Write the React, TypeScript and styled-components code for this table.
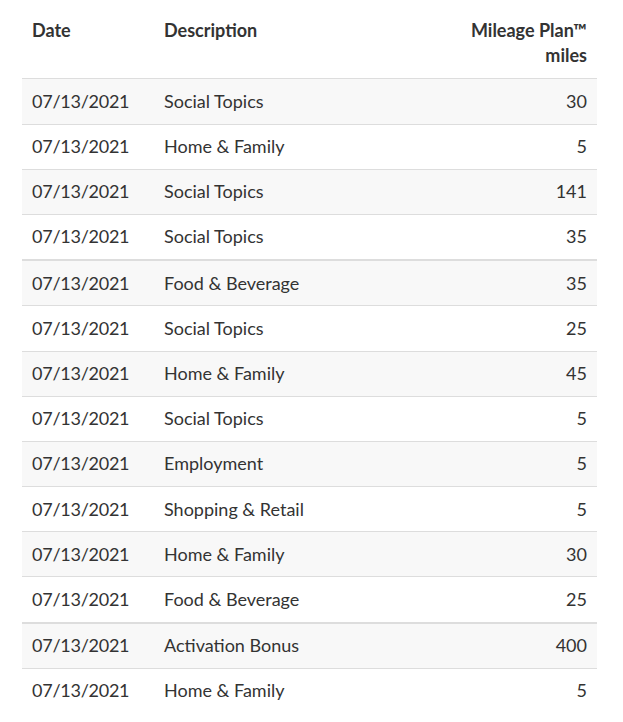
import React from "react";
import styled, { createGlobalStyle } from "styled-components";

const GlobalStyle = createGlobalStyle`
  body {
    margin: 0;
    background: #ffffff;
    font-family: Lato, "Open Sans", sans-serif;
    color: #333333;
  }
`;

const Wrapper = styled.div`
  padding: 9px 26px 0 22px;
`;

const Table = styled.table`
  width: 575px;
  border-collapse: collapse;
  font-size: 18px;
  line-height: 1.4;
`;

const HeadCell = styled.th<{ $right?: boolean; $width?: number }>`
  padding: 9px 10px 10px;
  font-weight: 700;
  vertical-align: top;
  text-align: ${(p) => (p.$right ? "right" : "left")};
  width: ${(p) => (p.$width ? `${p.$width}px` : "auto")};
  border-bottom: 1px solid #dddddd;
`;

const Body = styled.tbody`
  & + & {
    border-top: 2px solid #dddddd;
  }
  tr:nth-child(odd) {
    background: #f8f8f8;
  }
`;

const Row = styled.tr`
  border-top: 1px solid #dddddd;
  &:first-child {
    border-top: none;
  }
`;

const Cell = styled.td<{ $right?: boolean; $tight?: boolean }>`
  padding: 9.5px 10px;
  text-align: ${(p) => (p.$right ? "right" : "left")};
  letter-spacing: ${(p) => (p.$tight ? "-0.25px" : "normal")};
  white-space: nowrap;
`;

type Entry = { date: string; desc: string; miles: number };

const groups: Entry[][] = [
  [
    { date: "07/13/2021", desc: "Social Topics", miles: 30 },
    { date: "07/13/2021", desc: "Home & Family", miles: 5 },
    { date: "07/13/2021", desc: "Social Topics", miles: 141 },
    { date: "07/13/2021", desc: "Social Topics", miles: 35 },
  ],
  [
    { date: "07/13/2021", desc: "Food & Beverage", miles: 35 },
    { date: "07/13/2021", desc: "Social Topics", miles: 25 },
    { date: "07/13/2021", desc: "Home & Family", miles: 45 },
    { date: "07/13/2021", desc: "Social Topics", miles: 5 },
    { date: "07/13/2021", desc: "Employment", miles: 5 },
    { date: "07/13/2021", desc: "Shopping & Retail", miles: 5 },
    { date: "07/13/2021", desc: "Home & Family", miles: 30 },
    { date: "07/13/2021", desc: "Food & Beverage", miles: 25 },
  ],
  [
    { date: "07/13/2021", desc: "Activation Bonus", miles: 400 },
    { date: "07/13/2021", desc: "Home & Family", miles: 5 },
  ],
];

export default function App() {
  return (
    <Wrapper>
      <GlobalStyle />
      <Table>
        <thead>
          <tr>
            <HeadCell $width={112}>Date</HeadCell>
            <HeadCell>Description</HeadCell>
            <HeadCell $right>
              Mileage Plan™
              <br />
              miles
            </HeadCell>
          </tr>
        </thead>
        {groups.map((rows, g) => (
          <Body key={g}>
            {rows.map((r, i) => (
              <Row key={i}>
                <Cell $tight>{r.date}</Cell>
                <Cell>{r.desc}</Cell>
                <Cell $right>{r.miles}</Cell>
              </Row>
            ))}
          </Body>
        ))}
      </Table>
    </Wrapper>
  );
}
